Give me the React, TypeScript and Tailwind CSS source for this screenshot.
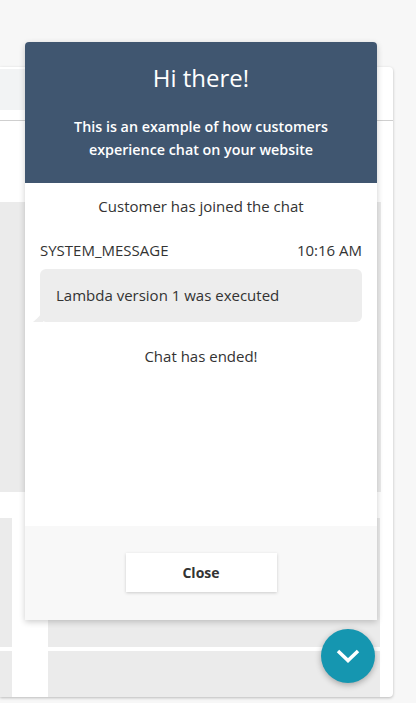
import React from 'react';

// Chat preview widget over a dimmed page skeleton.
const font = { fontFamily: '"Open Sans", "Noto Sans", sans-serif' };

const PageBehind = () => (
  <div className="pt-[67px] h-[703px] bg-[#f7f7f7]">
    <div className="w-[393px] h-[630px] bg-white rounded-r-[4px] shadow-[0_1px_3px_rgba(0,0,0,0.25)] overflow-hidden">
      <div className="pt-[2px] border-b border-[#cfcfcf]">
        <div className="h-[41px] w-[376px] bg-[#f2f3f4]" />
        <div className="h-[10px]" />
      </div>
      <div className="h-[81px]" />
      <div className="h-[290px] w-[381px] bg-[#ebebeb]" />
      <div className="h-[26px]" />
      <div className="grid grid-cols-[12px_332px] gap-x-[36px] gap-y-[4px]">
        <div className="h-[129px] bg-[#ebebeb]" />
        <div className="h-[129px] bg-[#ebebeb]" />
        <div className="h-[60px] bg-[#ebebeb]" />
        <div className="h-[60px] bg-[#ebebeb]" />
      </div>
    </div>
  </div>
);

const ChatPanel = () => (
  <div className="absolute left-[25px] top-[42px] w-[352px] h-[578px] flex flex-col bg-white rounded-t-[4px] shadow-[0_2px_6px_rgba(0,0,0,0.2)]">
    <div className="bg-[#405670] rounded-t-[4px] h-[141px] pt-[20px] text-white text-center">
      <div className="text-[24px] leading-[32px]">Hi there!</div>
      <div className="mt-[21px] text-[14.3px] leading-[23px] font-semibold px-[30px]">
        This is an example of how customers<br />experience chat on your website
      </div>
    </div>
    <div className="flex-1 px-[15px] text-[#333] text-[15px]">
      <div className="mt-[13px] text-center leading-[20px]">Customer has joined the chat</div>
      <div className="mt-[24px] flex justify-between leading-[20px]">
        <span>SYSTEM_MESSAGE</span>
        <span>10:16 AM</span>
      </div>
      <div className="relative mt-[9px] h-[53px] bg-[#ededed] rounded-[6px] pl-[16px] flex items-center">
        <span>Lambda version 1 was executed</span>
        <svg className="absolute left-[-7px] bottom-0" width="10" height="10" viewBox="0 0 10 10">
          <path d="M10 0 L10 10 L7 10 Q3 10 0 10 Q5 6 10 0 Z" fill="#ededed" />
        </svg>
      </div>
      <div className="mt-[24px] text-center leading-[20px]">Chat has ended!</div>
    </div>
    <div className="h-[94px] bg-[#f8f8f8] pt-[27px] flex justify-center items-start">
      <button className="w-[151px] h-[39px] bg-white shadow-[0_1px_3px_rgba(0,0,0,0.18)] text-[14px] font-bold text-[#333]">
        Close
      </button>
    </div>
  </div>
);

const Fab = () => (
  <button className="absolute left-[321px] top-[629px] w-[54px] h-[54px] rounded-full bg-[#1596b0] shadow-[0_2px_6px_rgba(0,0,0,0.3)] flex items-center justify-center">
    <svg width="24" height="14" viewBox="0 0 24 14">
      <path d="M2 2 L12 11.5 L22 2" fill="none" stroke="white" strokeWidth="3.5" />
    </svg>
  </button>
);

export default function App() {
  return (
    <div className="relative w-[416px] h-[703px] overflow-hidden" style={font}>
      <PageBehind />
      <ChatPanel />
      <Fab />
    </div>
  );
}
